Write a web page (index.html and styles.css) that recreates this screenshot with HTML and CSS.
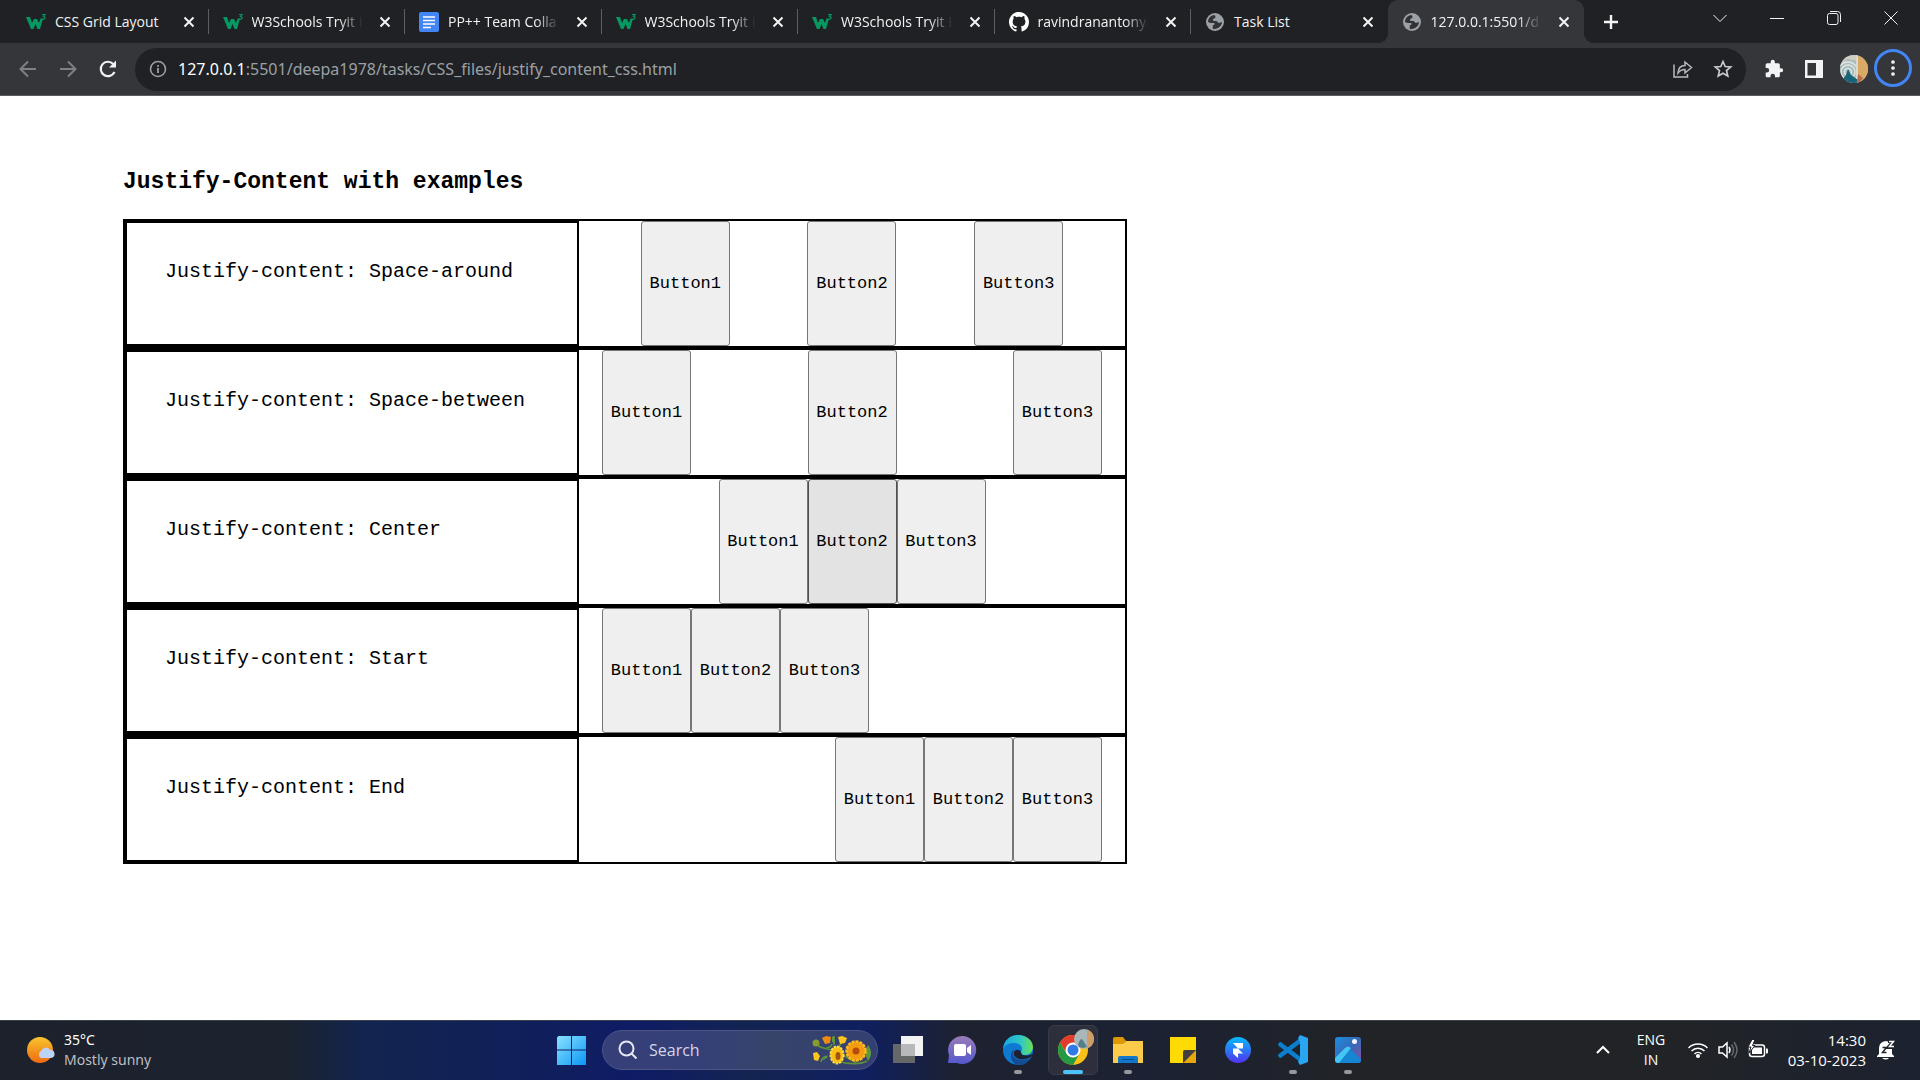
FILE: index.html
```html
<!DOCTYPE html>
<html lang="en">
<head>
<meta charset="utf-8">
<meta name="viewport" content="width=device-width, initial-scale=1">
<title>Justify-Content with examples</title>
<link rel="stylesheet" href="styles.css">
</head>
<body>
<svg class="defs" aria-hidden="true">
  <symbol id="w3" viewBox="0 0 20 20"><path d="M0 5h4l2 6 2-4h3l2 4 1.500-4.500H17L14 17h-2.500L9.500 12 7.500 17H5z" fill="#059862"/><path d="M16 2.500h3l-1.500 2c2.500 0 2 3.500-1.500 2.500" fill="none" stroke="#059862" stroke-width="1.200"/></symbol>
  <symbol id="globe" viewBox="0 0 18 18"><circle cx="9" cy="9" r="9" fill="#9aa0a6"/><path d="M8.500 2C4.800 2.300 2 5.300 2 9c.8 0 1.600.9 2.700.9h3c1 0 1.300 1 .6 1.700l-1.500.9V15.700c4.800 1 9-2.300 9.100-6.600-1.200-.2-1.500.8-2.800.8-1.400 0-1.600-2-3-2H7.500c-1.200-1.600 0-2.300 1.200-2.700 1-.3 1.300-1.600-.2-3.200z" fill="#303236"/></symbol>
  <symbol id="close" viewBox="0 0 12 12"><path d="M1.500 1.500l9 9M10.500 1.500l-9 9" stroke="#f1f3f4" stroke-width="2"/></symbol>
</svg>

<header class="browser">
  <div class="tabstrip">
    <nav class="tabs" aria-label="Tabs">
      <div class="tab"><svg class="favicon"><use href="#w3"/></svg><a class="tab-title" href="#">CSS Grid Layout</a><button class="tab-close" aria-label="Close tab"><svg><use href="#close"/></svg></button></div>
      <div class="tab"><svg class="favicon"><use href="#w3"/></svg><a class="tab-title faded" href="#">W3Schools Tryit E</a><button class="tab-close" aria-label="Close tab"><svg><use href="#close"/></svg></button></div>
      <div class="tab"><svg class="favicon" viewBox="0 0 20 20"><rect width="20" height="20" rx="2" fill="#4285f4"/><path d="M4 5h12M4 8.500h12M4 12h12M4 15.500h8" stroke="#fff" stroke-width="1.700"/></svg><a class="tab-title faded" href="#">PP++ Team Colla</a><button class="tab-close" aria-label="Close tab"><svg><use href="#close"/></svg></button></div>
      <div class="tab"><svg class="favicon"><use href="#w3"/></svg><a class="tab-title faded" href="#">W3Schools Tryit E</a><button class="tab-close" aria-label="Close tab"><svg><use href="#close"/></svg></button></div>
      <div class="tab"><svg class="favicon"><use href="#w3"/></svg><a class="tab-title faded" href="#">W3Schools Tryit E</a><button class="tab-close" aria-label="Close tab"><svg><use href="#close"/></svg></button></div>
      <div class="tab"><svg class="favicon" viewBox="0 0 16 16"><path fill="#fff" d="M8 0C3.580 0 0 3.580 0 8c0 3.540 2.290 6.530 5.470 7.590.4.070.55-.17.55-.38 0-.19-.01-.82-.01-1.490-2.010.37-2.530-.49-2.690-.94-.09-.23-.48-.94-.82-1.130-.28-.15-.68-.52-.01-.53.63-.01 1.080.58 1.230.82.72 1.210 1.870.87 2.330.66.07-.52.28-.87.51-1.070-1.780-.2-3.640-.89-3.640-3.950 0-.87.31-1.590.82-2.150-.08-.2-.36-1.020.08-2.120 0 0 .67-.21 2.200.82.64-.18 1.320-.27 2-.27s1.360.09 2 .27c1.530-1.040 2.200-.82 2.200-.82.44 1.100.16 1.920.08 2.120.51.56.82 1.270.82 2.150 0 3.070-1.870 3.750-3.650 3.950.29.25.54.73.54 1.480 0 1.070-.01 1.930-.01 2.200 0 .21.15.46.55.38A8.010 8.010 0 0 0 16 8c0-4.420-3.580-8-8-8z"/></svg><a class="tab-title faded" href="#">ravindranantony/</a><button class="tab-close" aria-label="Close tab"><svg><use href="#close"/></svg></button></div>
      <div class="tab"><svg class="favicon globe"><use href="#globe"/></svg><a class="tab-title" href="#">Task List</a><button class="tab-close" aria-label="Close tab"><svg><use href="#close"/></svg></button></div>
      <div class="tab active"><svg class="favicon globe"><use href="#globe"/></svg><a class="tab-title faded" href="#" aria-current="page">127.0.0.1:5501/d</a><button class="tab-close" aria-label="Close tab"><svg><use href="#close"/></svg></button></div>
    </nav>
    <button class="new-tab" aria-label="New tab"><svg width="16" height="16" viewBox="0 0 16 16"><path d="M8 1v14M1 8h14" stroke="#f1f3f4" stroke-width="2.400"/></svg></button>
    <div class="window-controls">
      <button aria-label="Search tabs"><svg viewBox="0 0 14 14"><path d="M.5 4L7 10.500 13.500 4"/></svg></button>
      <button aria-label="Minimize"><svg viewBox="0 0 14 14"><path d="M0 7.500h14"/></svg></button>
      <button aria-label="Restore"><svg viewBox="0 0 14 14"><rect x=".5" y="2.500" width="10.500" height="11" rx="2"/><path d="M3 .5h7.500a3 3 0 0 1 3 3V11"/></svg></button>
      <button aria-label="Close"><svg viewBox="0 0 14 14"><path d="M.5.5l13 13M13.500.5l-13 13"/></svg></button>
    </div>
  </div>
  <div class="toolbar">
    <div class="nav-buttons">
      <button aria-label="Back"><svg viewBox="0 0 20 20"><path d="M18 10H3M10 2.500L2.500 10l7.500 7.500" fill="none" stroke="#7e8084" stroke-width="2"/></svg></button>
      <button aria-label="Forward"><svg viewBox="0 0 20 20"><path d="M2 10h15M10 2.500l7.500 7.500-7.500 7.500" fill="none" stroke="#7e8084" stroke-width="2"/></svg></button>
      <button aria-label="Reload"><svg viewBox="0 0 20 20"><path d="M16.500 13A7.200 7.200 0 1 1 15.200 5" fill="none" stroke="#f1f3f4" stroke-width="2.200"/><path d="M18 1.500v7h-7z" fill="#f1f3f4"/></svg></button>
    </div>
    <div class="omnibox">
      <svg width="18" height="18" viewBox="0 0 18 18"><circle cx="9" cy="9" r="7.500" fill="none" stroke="#9aa0a6" stroke-width="1.600"/><path d="M9 8v5M9 5v1.800" stroke="#9aa0a6" stroke-width="1.800"/></svg>
      <a class="url" href="#"><span class="host">127.0.0.1</span>:5501/deepa1978/tasks/CSS_files/justify_content_css.html</a>
      <button aria-label="Share"><svg viewBox="0 0 20 20" fill="none" stroke="#b8babd" stroke-width="1.500"><path d="M1 5.500V18h13.500v-3M5 14c.3-5 3-7.500 7-7.500V3l6.500 5.500L12 14v-3.500c-3 0-5 .8-7 3.500z"/></svg></button>
      <button aria-label="Bookmark"><svg viewBox="0 0 20 20"><path d="M10 2.500l2.200 5 5.500.5-4.200 3.600 1.300 5.400L10 14.200 5.200 17l1.300-5.400L2.300 8l5.500-.5z" fill="none" stroke="#c8cacd" stroke-width="1.700"/></svg></button>
    </div>
    <div class="actions">
      <button aria-label="Extensions"><svg viewBox="0 0 24 24"><path fill="#f1f3f4" d="M20.500 11H19V7c0-1.100-.9-2-2-2h-4V3.500a2.500 2.500 0 0 0-5 0V5H4c-1.100 0-2 .9-2 2v3.800h1.500a2.700 2.700 0 0 1 0 5.400H2V20c0 1.100.9 2 2 2h3.800v-1.500a2.700 2.700 0 0 1 5.400 0V22H17c1.100 0 2-.9 2-2v-4h1.500a2.500 2.500 0 0 0 0-5z"/></svg></button>
      <button aria-label="Side panel"><svg viewBox="0 0 20 20"><path fill="#f1f3f4" fill-rule="evenodd" d="M1 1h18v18H1zM3.500 4v12.500H12V4z"/></svg></button>
      <button class="avatar" aria-label="Profile"><svg viewBox="0 0 28 28"><clipPath id="round"><circle cx="14" cy="14" r="14"/></clipPath><g clip-path="url(#round)"><path fill="#a8bcbc" d="M0 0h28v28H0z"/><g fill="none" stroke="#e0e7e3" stroke-width="1.300"><circle cx="8" cy="17" r="3.500"/><circle cx="8" cy="17" r="7"/><circle cx="8" cy="17" r="10"/></g><path fill="#cfccc0" d="M0 0h17v6L8 4 0 9z"/><path fill="#176579" d="M8 14l3 6 6 4v4H3v-4l3-4z"/><path fill="#d9aa66" d="M18 0h10v28H17z"/><path fill="#dcd9d0" d="M16 0h2v24h-2z"/><path fill="#b86a50" d="M18 19l5 4-3 4h-3z"/></g></svg></button>
      <button class="menu" aria-label="Menu"><svg viewBox="0 0 20 20" fill="#f1f3f4"><circle cx="10" cy="2.500" r="2.300"/><circle cx="10" cy="10" r="2.300"/><circle cx="10" cy="17.500" r="2.300"/></svg></button>
    </div>
  </div>
</header>

<main class="page">
  <h3 class="heading">Justify-Content with examples</h3>
  <div class="examples">
    <section class="example"><p class="label">Justify-content: Space-around</p><div class="buttons around"><button>Button1</button><button>Button2</button><button>Button3</button></div></section>
    <section class="example"><p class="label">Justify-content: Space-between</p><div class="buttons between"><button>Button1</button><button>Button2</button><button>Button3</button></div></section>
    <section class="example"><p class="label">Justify-content: Center</p><div class="buttons center"><button>Button1</button><button class="hovered">Button2</button><button>Button3</button></div></section>
    <section class="example"><p class="label">Justify-content: Start</p><div class="buttons start"><button>Button1</button><button>Button2</button><button>Button3</button></div></section>
    <section class="example"><p class="label">Justify-content: End</p><div class="buttons end"><button>Button1</button><button>Button2</button><button>Button3</button></div></section>
  </div>
</main>

<footer class="taskbar">
  <button class="weather">
    <svg width="28" height="28" viewBox="0 0 28 28"><defs><linearGradient id="sun" x2="0" y2="1"><stop stop-color="#f8c530"/><stop offset="1" stop-color="#f06a10"/></linearGradient></defs><circle cx="13" cy="14" r="13" fill="url(#sun)"/><path d="M14 22a4 4 0 0 1 0-7 5 5 0 0 1 9-1 4 4 0 0 1 1 8z" fill="#bdd3f5"/></svg>
    <span class="weather-text"><span>35°C</span><span class="muted">Mostly sunny</span></span>
  </button>
  <div class="apps">
    <button class="app" aria-label="Start"><svg viewBox="0 0 30 30"><defs><linearGradient id="win" x2="1" y2="1"><stop stop-color="#8be2ff"/><stop offset="1" stop-color="#0a96f5"/></linearGradient></defs><path fill="url(#win)" d="M1.500 1H14v13.500H0V2.500zM15 1h14v13.500H15zM0 15.500h14V30H0zM15 15.500h14V30H15z"/></svg></button>
    <label class="search">
      <svg width="20" height="20" viewBox="0 0 20 20" fill="none" stroke="#e4e6f2" stroke-width="2"><circle cx="8.500" cy="8.500" r="7"/><path d="M13.500 13.500l5 5"/></svg>
      <input type="search" placeholder="Search" aria-label="Search">
      <svg width="60" height="30" viewBox="0 0 60 30"><g fill="none" stroke="#5d8f3a" stroke-width="1.600"><path d="M4 8c4 7 10 4 17 8M20 9c-1 3-3 4-6 4M22 10V1M29 8c-1 4-4 5-8 6M9 27c0-4 3-5 6-6M26 26c10 4 24 3 29 0M44 27c-5-1-9-5-13-7"/></g><path fill="#5d9a3c" d="M56 10c4 5 4 11 0 16-3-5-3-11 0-16zM20 2l2-1 1 7-3-1zM10 26l4-5 2 1z"/><circle cx="4" cy="8" r="3.500" fill="#8a9a32"/><path fill="#ef8a12" d="M10 3l4-2 5 1-1 6-5 1z"/><path fill="#ffc41e" d="M26 2l4-1 5 2-2 5-5 1zM1 18l4-1 3 4-2 5-4-1z"/><ellipse cx="25" cy="20" rx="6.500" ry="8.500" fill="#f9bd15" stroke="#ffdc42" stroke-width="2" stroke-dasharray="2.500 1"/><circle cx="44" cy="16" r="9.500" fill="#f49c10" stroke="#ffb920" stroke-width="2.500" stroke-dasharray="3 1"/><ellipse cx="26" cy="21" rx="2.500" ry="4" fill="#a5540e"/><circle cx="44" cy="16" r="3.500" fill="#b54c0c"/></svg>
    </label>
    <button class="app" aria-label="Task view"><svg viewBox="0 0 30 30"><path fill="#656769" d="M0 9h22v19H0z"/><path fill="#f3f3f3" d="M8 1h22v20H8z"/><path fill="#b6b8ba" d="M8 9h14v12H8z"/></svg></button>
    <button class="app" aria-label="Chat"><svg viewBox="0 0 30 30"><defs><linearGradient id="chat" x2="0" y2="1"><stop stop-color="#9a7bb8"/><stop offset="1" stop-color="#5558cf"/></linearGradient></defs><path fill="url(#chat)" d="M14 1a14 14 0 1 1-5 27H0l1-8A14 14 0 0 1 14 1z"/><rect x="6" y="9" width="12" height="12" rx="2" fill="#fff"/><path fill="#fff" d="M19 13l4-3v10l-4-3z"/></svg></button>
    <button class="app running" aria-label="Edge"><svg viewBox="0 0 30 30"><defs><linearGradient id="edge" x2="1"><stop stop-color="#19a5e3"/><stop offset=".6" stop-color="#30c9c5"/><stop offset="1" stop-color="#6be04e"/></linearGradient></defs><circle cx="15" cy="15" r="15" fill="#0d79d1"/><path fill="url(#edge)" d="M0 14C1 5 7 0 15 0c9 0 15 6 15 12 0 5-4 8-8 8-3 0-5-1-4-3 3-5-1-9-7-9-5 0-9 2-11 6z"/><path fill="#134c94" d="M11 14c-4 7 3 15 17 9-4 6-9 8-14 7-7-3-8-12-3-16z"/><path fill="#1e2230" d="M18 17c-2-4-9-2-7 3 3 6 11 5 17 2l3-4c-4 3-13 4-13-1z"/></svg></button>
    <button class="app current" aria-label="Chrome"><svg viewBox="0 0 30 30"><circle cx="15" cy="15" r="15" fill="#fbc116"/><path fill="#e33b2e" d="M2 7.500A15 15 0 0 1 28 7.500H15L9 19z"/><path fill="#249a45" d="M2 7.500l6.500 11.200L15 22.500l-2.500 7.300A15 15 0 0 1 2 7.500z"/><path fill="#249a45" d="M21.500 18.700L15 30h-2l-1-8z"/><circle cx="15" cy="15" r="7.500" fill="#fff"/><circle cx="15" cy="15" r="5.500" fill="#2f7ae5"/></svg><svg class="badge" viewBox="0 0 20 20"><circle cx="10" cy="10" r="10" fill="#a9b7b8"/><path fill="#cf9d68" d="M13 .5a10 10 0 0 1 0 19z"/><path fill="#577e8b" d="M5 13c2-4 3-4 5 0l3 5-4 1c-4 0-6-3-4-6z"/></svg></button>
    <button class="app running" aria-label="File Explorer"><svg viewBox="0 0 30 30"><path fill="#dc9800" d="M0 4q0-2 2-2h8l3 4-4 5H0z"/><path fill="#fdcb4a" d="M0 9h10l3-3h17v22H0z"/><path fill="#1476c8" d="M5 28v-5q0-2 2-2h16q2 0 2 2v5z"/><path stroke="#084b8a" d="M9 24.500h12"/></svg></button>
    <button class="app" aria-label="Sticky Notes"><svg viewBox="0 0 30 30"><path fill="#ffdb05" d="M2 2h26v13L15 28H2z"/><path fill="#e8a80c" d="M28 15v13H15z"/><path fill="#41403f" d="M15 28V17q0-2 2-2h11z"/></svg></button>
    <button class="app" aria-label="Prototype player"><svg viewBox="0 0 30 30"><defs><linearGradient id="pp" x2="0" y2="1"><stop stop-color="#04bcff"/><stop offset="1" stop-color="#5133ef"/></linearGradient></defs><circle cx="15" cy="15" r="13" fill="url(#pp)"/><path fill="#fff" d="M10 8h10v5.500h-5zM10 13.500h5l5 5h-5V23l-5-4.500z"/></svg></button>
    <button class="app running" aria-label="Visual Studio Code"><svg viewBox="0 0 30 30"><path d="M2.500 9.500L23 25M2.500 20.500L23 5" stroke="#0b7fce" stroke-width="4.500" stroke-linecap="round" fill="none"/><path fill="#29a5f2" d="M22 0l8 3v24l-8 3-2-3 2-4V7l-2-4z"/></svg></button>
    <button class="app running" aria-label="Photos"><svg viewBox="0 0 30 30"><defs><linearGradient id="ph" x2="1" y2="1"><stop stop-color="#1a8fe0"/><stop offset=".5" stop-color="#3769b8"/><stop offset="1" stop-color="#86509f"/></linearGradient></defs><rect x="2" y="2" width="26" height="26" rx="3" fill="url(#ph)"/><path fill="#1685d4" d="M3 26l10-12q2-2 4 0l11 10v1q0 3-3 3H5z"/><path fill="#42c6f5" d="M2 23l10-10q3-3 6 0L6 28H5q-3 0-3-3z"/><circle cx="21.500" cy="6.500" r="2.500" fill="#f4f4ff"/></svg></button>
  </div>
  <div class="tray">
    <button aria-label="Show hidden icons"><svg width="16" height="16" viewBox="0 0 16 16"><path d="M2 11l6-6 6 6" fill="none" stroke="#fff" stroke-width="2"/></svg></button>
    <button class="lang"><span>ENG</span><span>IN</span></button>
    <button class="status" aria-label="Network, volume, battery">
      <svg viewBox="0 0 20 20" fill="none" stroke="#fff" stroke-width="1.500"><path d="M.5 8a13.500 13.500 0 0 1 19 0M3.500 11a9 9 0 0 1 13 0M6.500 14a5 5 0 0 1 7 0"/><circle cx="10" cy="16" r="1.300" fill="#fff"/></svg>
      <svg viewBox="0 0 20 20" fill="none" stroke="#fff" stroke-width="1.500"><path d="M1 7h3.500L9 3v14l-4.500-4H1zM11 7q2 3 0 6"/><path stroke="#66696d" d="M13.500 4.500q4 5.500 0 11M16 2q6 8 0 16"/></svg>
      <svg viewBox="0 0 20 20"><rect x="1.500" y="5" width="15" height="11.500" rx="2.500" fill="none" stroke="#fff" stroke-width="1.500"/><rect x="4" y="7.500" width="10" height="6.500" fill="#fff"/><path fill="#fff" d="M18 8.500h1q1 0 1 1v3q0 1-1 1h-1z"/><path fill="#fff" stroke="#20242a" d="M4-.5L0 7h3l-2 6 6-7.500H4.500L7-.5z"/></svg>
    </button>
    <button class="clock"><span>14:30</span><span>03-10-2023</span></button>
    <button aria-label="Notifications"><svg width="18" height="20" viewBox="0 0 18 20"><path fill="#fff" d="M2 8q0-6 7-7 6 1 6 7v6l2 2v1H0v-1l2-2zM5 18h7q-3 3-7 0z"/><path d="M5.500 7.500h4l-4 5h4" fill="none" stroke="#20242a" stroke-width="1.500"/><path d="M11 1h6l-5 6h5" fill="none" stroke="#20242a" stroke-width="4"/><path d="M12 1.500h4.500l-4 5h4.500" fill="none" stroke="#fff" stroke-width="1.500"/></svg></button>
  </div>
</footer>
</body>
</html>
```
FILE: styles.css
```css
* { box-sizing: border-box; }
body {
  margin: 0;
  min-height: 100vh;
  display: flex;
  flex-direction: column;
  background: #fff;
  font-family: "Open Sans", "Noto Sans", sans-serif;
}
button { padding: 0; border: 0; background: none; color: inherit; font: inherit; }
a { color: inherit; text-decoration: none; }
svg { display: block; }
.defs { position: absolute; width: 0; height: 0; }

/* Tab strip */
.browser { background: #35363a; border-bottom: 1px solid #5b5c60; color: #f1f3f4; }
.tabstrip { display: flex; height: 43px; padding-left: 12px; background: #202124; }
.tabs { display: flex; flex: 0 1 1572px; min-width: 0; }
.tab {
  position: relative;
  display: flex;
  flex: 1 1 0;
  align-items: center;
  gap: 9px;
  min-width: 0;
  padding: 0 10px 0 14px;
  font-size: 14px;
  line-height: 20px;
}
.tab::after { content: ""; position: absolute; right: 0; top: 9px; width: 1px; height: 25px; background: #5c5e62; }
.tab:nth-last-child(-n+2)::after { display: none; }
.favicon { flex: none; width: 20px; height: 20px; }
.globe { padding: 1px; }
.tab-title { flex: 1; min-width: 0; white-space: nowrap; }
.faded {
  -webkit-mask-image: linear-gradient(to right, #000 76%, transparent 97%);
  mask-image: linear-gradient(to right, #000 76%, transparent 97%);
}
.tab-close { display: grid; place-items: center; width: 20px; height: 20px; }
.tab-close svg { width: 12px; height: 12px; }
.tab.active { background: #35363a; border-radius: 10px 10px 0 0; }
.tab.active::before,
.tab.active::after {
  content: "";
  display: block;
  position: absolute;
  top: auto;
  bottom: 0;
  width: 10px;
  height: 10px;
  background: radial-gradient(circle at 0 0, #202124 10px, #35363a 10px);
}
.tab.active::before { left: -10px; }
.tab.active::after { right: -10px; transform: scaleX(-1); }
.new-tab { display: grid; place-items: center; width: 54px; height: 43px; }
.window-controls { display: flex; margin-left: auto; height: 36px; padding-right: 1px; }
.window-controls button { display: grid; place-items: center; width: 57px; }
.window-controls svg { width: 14px; height: 14px; fill: none; stroke: #f1f3f4; }

/* Address bar */
.toolbar { display: flex; align-items: center; height: 52px; padding: 0 8px; }
.nav-buttons { display: flex; width: 127px; }
.nav-buttons button,
.omnibox button,
.actions button { display: grid; place-items: center; width: 40px; height: 40px; }
.toolbar button svg { width: 20px; height: 20px; }
.omnibox {
  display: flex;
  flex: 1;
  align-items: center;
  min-width: 0;
  height: 43px;
  padding: 0 3px 0 14px;
  border-radius: 22px;
  background: #202124;
}
.url { flex: 1; min-width: 0; margin-left: 11px; white-space: nowrap; font-family: "Noto Sans", sans-serif; font-size: 16px; color: #9aa0a6; }
.host { color: #fff; }
.actions { display: flex; padding-left: 8px; }
.toolbar .avatar svg { width: 28px; height: 28px; }
.actions .menu { width: 38px; height: 38px; border: 3px solid #4285f4; border-radius: 50%; }
.toolbar .menu svg { width: 16px; height: 16px; }

/* Page */
.page { flex: 1; padding: 72px 123px; font-family: "Liberation Mono", "Courier New", monospace; color: #000; }
.heading { margin: 0 0 23px; font-size: 23px; line-height: 28px; }
.examples { max-width: 1004px; }
.example { display: grid; grid-template-columns: 454px 1fr; height: 129px; border: 2px solid #000; }
.label { margin: 0; padding: 37px 38px; border: 2px solid #000; font-size: 20px; line-height: 24px; }
.buttons { display: flex; padding: 0 23px; }
.buttons button { width: 89px; border: 1px solid #767676; border-radius: 3px; background: #efefef; font-size: 17px; }
.buttons .hovered { border-color: #4f4f4f; background: #e3e3e3; }
.around { justify-content: space-around; }
.between { justify-content: space-between; }
.center { justify-content: center; }
.start { justify-content: flex-start; }
.end { justify-content: flex-end; }

/* Taskbar */
.taskbar {
  display: grid;
  grid-template-columns: 1fr auto 1fr;
  align-items: center;
  height: 60px;
  padding-bottom: 1px;
  border-top: 1px solid #3a424d;
  background: linear-gradient(to right, #1d212c 0%, #1b232f 15%, #12244f 19%, #101f5b 28%, #0f1c66 33%, #132451 39%, #0f1f60 45%, #1d2130 50%, #1c2233 60%, #222326 72%, #212326 87%, #1c2230 100%);
  color: #fff;
  font-size: 14px;
  line-height: 20px;
}
.weather { display: flex; align-items: center; justify-self: start; gap: 9px; padding-left: 27px; text-align: left; font-family: "Noto Sans", sans-serif; }
.weather-text, .lang, .clock { display: flex; flex-direction: column; }
.muted { color: #bcbec2; }
.apps { display: flex; align-items: center; gap: 5px; }
.app { position: relative; display: grid; place-items: center; width: 50px; height: 50px; border-radius: 6px; }
.app svg { width: 30px; height: 30px; }
.app.current { background: #2d303c; border: 1px solid #393c47; }
.app .badge { position: absolute; top: 3px; right: 3px; width: 20px; height: 20px; }
.running::after, .current::after {
  content: "";
  position: absolute;
  bottom: 1px;
  left: calc(50% - 4px);
  width: 8px;
  height: 4px;
  border-radius: 2px;
  background: #96989d;
}
.current::after { bottom: 0; left: calc(50% - 10px); width: 20px; background: #4cc2ff; }
.search {
  display: flex;
  align-items: center;
  gap: 11px;
  width: 276px;
  height: 40px;
  padding: 0 5px 0 15px;
  border: 1px solid #4d5586;
  border-radius: 20px;
  background: linear-gradient(to right, #363f78, #353f78 35%, #36446a 60%, #343f72);
}
.search input { flex: 1; min-width: 0; padding: 0; border: 0; outline: 0; background: none; font: inherit; font-size: 16px; color: #fff; }
.search input::placeholder { color: #d3d6e4; opacity: 1; }
.tray { display: flex; align-items: center; justify-self: end; padding-right: 25px; }
.lang { width: 44px; margin-left: 18px; align-items: center; }
.status { display: flex; gap: 10px; margin-left: 15px; }
.status svg { width: 20px; height: 20px; }
.clock { align-items: flex-end; width: 98px; font-size: 15px; }
.clock + button { margin-left: 11px; }
```
